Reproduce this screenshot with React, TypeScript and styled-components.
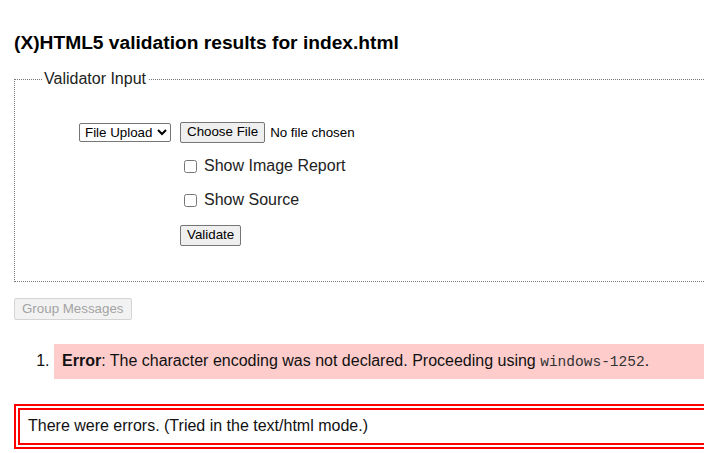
import styled, { createGlobalStyle } from "styled-components"

const GlobalStyle = createGlobalStyle`
  html, body {
    margin: 0;
    padding: 0;
    overflow: hidden;
    background: #fff;
  }
  body {
    font-family: "Liberation Sans", Arial, sans-serif;
    font-size: 16px;
    color: #000;
  }
`

const Page = styled.div`
  width: 1000px;
  padding: 32px 0 0 14px;
`

const Title = styled.h3`
  margin: 0 0 16px 0;
  font-size: 19.2px;
  font-weight: bold;
  line-height: 22px;
`

const InputSet = styled.fieldset`
  margin: 0;
  padding: 27px 0 30px 0;
  border: 1px dotted #777;

  legend {
    margin-left: 27px;
    padding: 0 2px;
    font-size: 16px;
    line-height: 18px;
    color: #222;
  }
`

const FormGrid = styled.div`
  display: grid;
  grid-template-columns: 101px auto;
  grid-auto-rows: 34px;
  align-items: center;
  margin-left: 64px;
`

const Select = styled.select`
  justify-self: start;
  font-family: "Liberation Sans", Arial, sans-serif;
  font-size: 13.33px;
  height: 19px;
  padding: 0 0 0 1px;
  border: 1px solid #767676;
  border-radius: 2px;
  background: #fff;
  color: #000;
  width: 92px;
`

const FileRow = styled.div`
  display: flex;
  align-items: center;
  font-size: 13.33px;
  gap: 5px;
`

const Button = styled.button<{ $disabled?: boolean }>`
  font-family: "Liberation Sans", Arial, sans-serif;
  font-size: 13.33px;
  line-height: 16px;
  padding: 1px 6px;
  border: 1px solid ${(p) => (p.$disabled ? "#d4d4d4" : "#767676")};
  border-radius: 2px;
  background: ${(p) => (p.$disabled ? "#f2f2f2" : "#efefef")};
  color: ${(p) => (p.$disabled ? "#a3a3a3" : "#000")};
  height: 21px;
`

const Check = styled.label`
  grid-column: 2;
  display: flex;
  align-items: center;
  font-size: 16px;
  color: #222;

  input {
    width: 13px;
    height: 13px;
    margin: 1px 7px 0 4px;
  }
`

const SubmitCell = styled.div`
  grid-column: 2;
  padding-top: 2px;
`

const GroupButton = styled(Button)`
  display: block;
  margin-top: 16px;
  height: 22px;
  padding: 2px 7px;
`

const Messages = styled.ol`
  margin: 24px 0 0 0;
  padding: 0 0 0 40px;
`

const Item = styled.li`
  background: #ffcccc;
  padding: 8px 8px;
  line-height: 18px;
  color: #111;

  strong {
    font-weight: bold;
  }

  code {
    font-family: "Liberation Mono", "DejaVu Sans Mono", monospace;
    font-size: 14.5px;
    color: #333;
  }
`

const Failure = styled.p`
  margin: 25px 0 0 0;
  border: 6px double #f00;
  padding: 7px 8px 8px 8px;
  line-height: 18px;
  color: #111;
`

export default function App() {
  return (
    <>
      <GlobalStyle />
      <Page>
        <Title>(X)HTML5 validation results for index.html</Title>
        <InputSet>
          <legend>Validator Input</legend>
          <FormGrid>
            <Select defaultValue="file">
              <option value="file">File Upload</option>
              <option value="url">Address</option>
              <option value="text">Text Field</option>
            </Select>
            <FileRow>
              <Button type="button">Choose File</Button>
              <span>No file chosen</span>
            </FileRow>
            <Check>
              <input type="checkbox" />
              Show Image Report
            </Check>
            <Check>
              <input type="checkbox" />
              Show Source
            </Check>
            <SubmitCell>
              <Button type="button">Validate</Button>
            </SubmitCell>
          </FormGrid>
        </InputSet>
        <GroupButton type="button" $disabled disabled>
          Group Messages
        </GroupButton>
        <Messages>
          <Item>
            <strong>Error</strong>: The character encoding was not declared. Proceeding using{" "}
            <code>windows-1252</code>.
          </Item>
        </Messages>
        <Failure>There were errors. (Tried in the text/html mode.)</Failure>
      </Page>
    </>
  )
}
